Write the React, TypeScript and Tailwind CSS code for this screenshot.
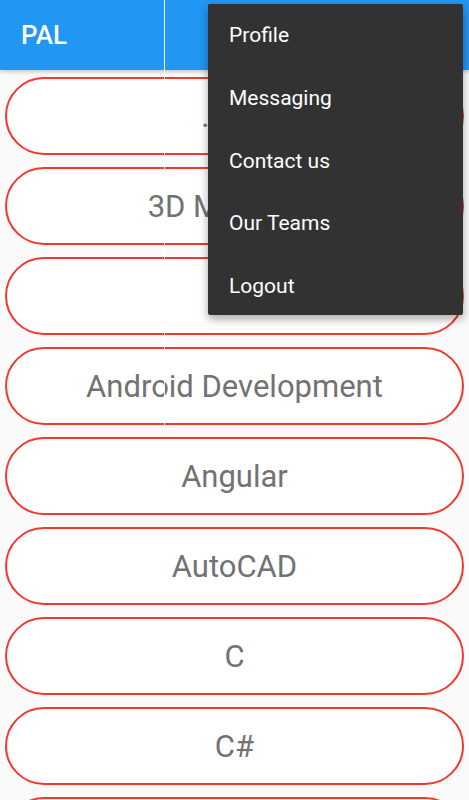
import React from "react";

const items = [".NET", "3D Modeling", "AI", "Android Development", "Angular", "AutoCAD", "C", "C#", "C++"];
const menu = ["Profile", "Messaging", "Contact us", "Our Teams", "Logout"];

export default function App() {
  return (
    <div className="relative w-[469px] h-[800px] overflow-hidden bg-[#fafafa]" style={{ fontFamily: "Roboto, 'Noto Sans', sans-serif" }}>
      <div className="h-[70px] bg-[#2196f3] flex items-center pl-[21px] shadow-[0_2px_4px_rgba(0,0,0,0.2)]">
        <span className="text-white text-[26px] font-medium">PAL</span>
      </div>
      <div className="flex flex-col gap-[12px] pt-[7px] px-[5px]">
        {items.map((t) => (
          <div key={t} className="h-[78px] rounded-full border-2 border-[#f4382c] bg-white flex items-center justify-center">
            <span className="text-[#727272] text-[31px] leading-none">{t}</span>
          </div>
        ))}
      </div>
      <div className="absolute left-[164px] top-0 w-px h-[437px] bg-white/90" />
      <div className="absolute left-[208px] top-[4px] w-[255px] h-[311px] bg-[#323232] rounded-[2px] shadow-[0_4px_10px_rgba(0,0,0,0.35)] flex flex-col">
        {menu.map((m) => (
          <div key={m} className="h-[62.75px] shrink-0 flex items-center pl-[21px] pt-[1px]">
            <span className="text-white text-[21px]">{m}</span>
          </div>
        ))}
      </div>
    </div>
  );
}
